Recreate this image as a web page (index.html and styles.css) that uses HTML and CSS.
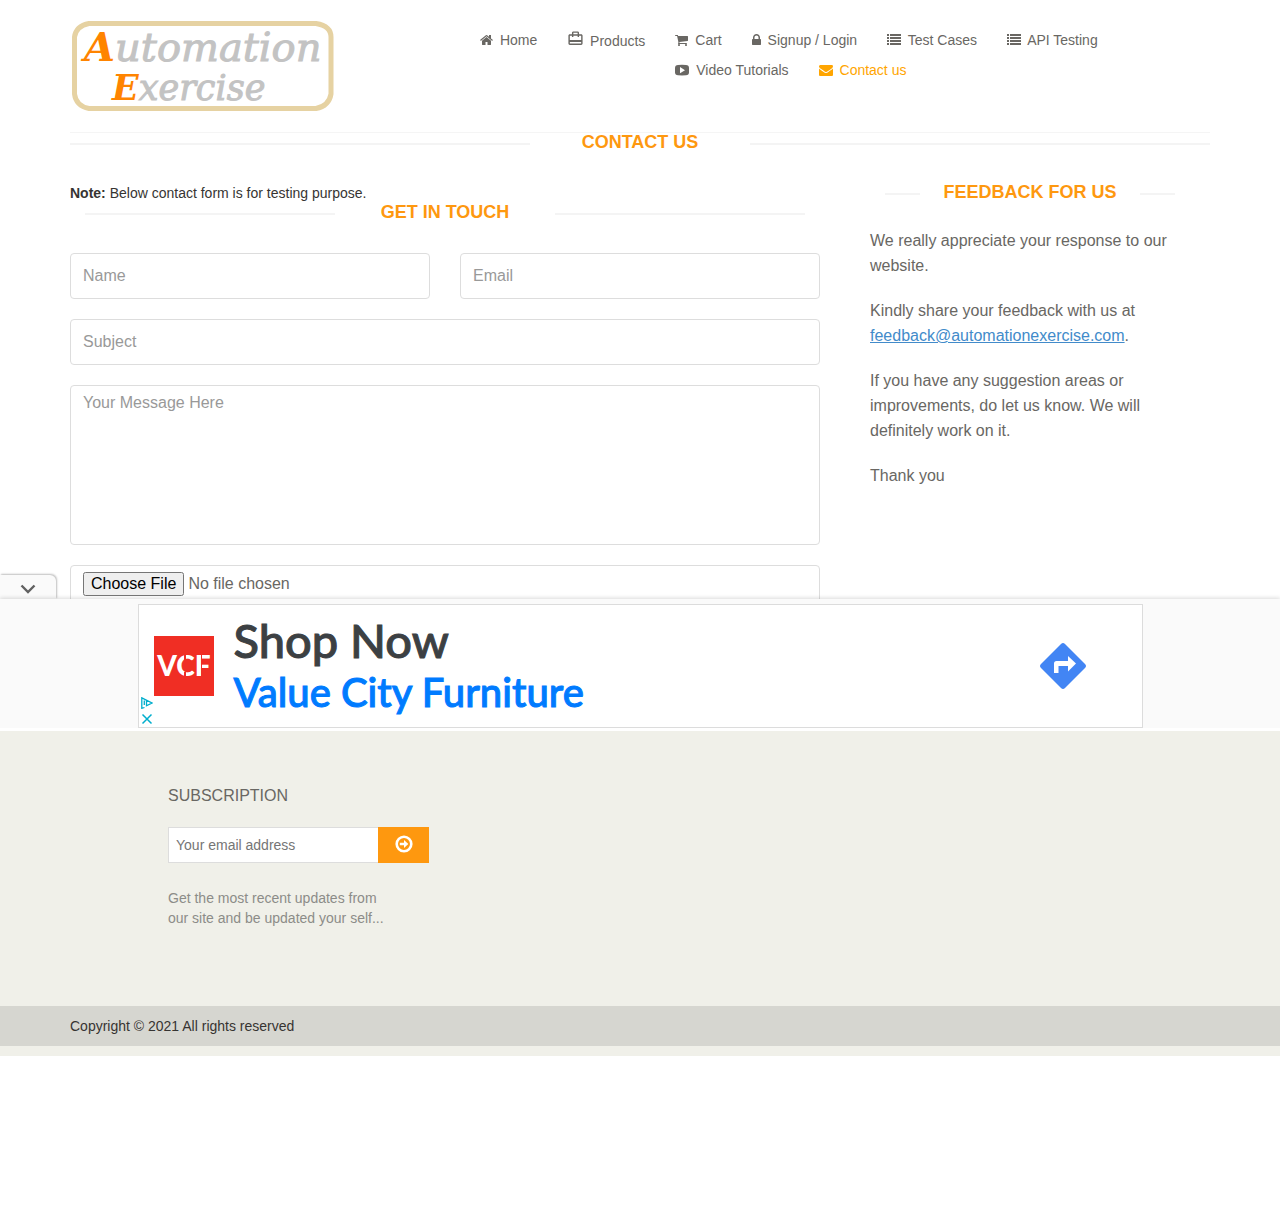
FILE: index.html
```html
<!DOCTYPE html>
<html lang="en">
<head>
<meta charset="utf-8">
<meta name="viewport" content="width=device-width, initial-scale=1">
<title>Automation Exercise - Contact Us</title>
<link rel="stylesheet" href="styles.css">
</head>
<body>
<header class="container">
  <div class="header-row">
    <a class="logo" href="#" aria-label="Automation Exercise">
      <svg width="266" height="92" viewBox="0 0 266 92">
        <path d="M19 3.500H246Q261 6 261 17V74Q259 86 246 88.500H19Q6 86 4.500 74V17Q6 6 19 3.500Z" fill="#fff" stroke="#e6d2a2" stroke-width="5"/>
        <text class="logo-text" x="14" y="41" font-size="40"><tspan class="logo-cap">A</tspan>utomation</text>
        <text class="logo-text" x="42" y="80" font-size="35"><tspan class="logo-cap">E</tspan>xercise</text>
      </svg>
    </a>
    <nav>
      <ul class="menu">
        <li><a href="#"><svg class="icon" width="13" height="14" viewBox="64 0 1664 1792"><path d="M1472 992v480q0 26-19 45t-45 19h-384v-384h-256v384h-384q-26 0-45-19t-19-45v-480q0-1 .5-3t.5-3l575-474 575 474q1 2 1 6zm223-69l-62 74q-8 9-21 11h-3q-13 0-21-7l-692-577-692 577q-12 8-24 7-13-2-21-11l-62-74q-8-10-7-23.500t11-21.500l719-599q32-26 76-26t76 26l244 204v-195q0-14 9-23t23-9h192q14 0 23 9t9 23v408l219 182q10 8 11 21.500t-7 23.500z"/></svg> Home</a></li>
        <li><a href="#"><svg class="icon icon-bag" width="17" height="17" viewBox="0 0 24 24"><path d="M20 6h-3V4c0-1.110-.89-2-2-2H9c-1.110 0-2 .89-2 2v2H4c-1.110 0-2 .89-2 2v11c0 1.110.89 2 2 2h16c1.110 0 2-.89 2-2V8c0-1.110-.89-2-2-2zM9 4h6v2H9V4zm11 15H4v-2h16v2zm0-5H4V8h3v2h2V8h6v2h2V8h3v6z"/></svg> Products</a></li>
        <li><a href="#"><svg class="icon" width="13" height="14" viewBox="64 0 1664 1792"><path d="M704 1536q0 52-38 90t-90 38-90-38-38-90 38-90 90-38 90 38 38 90zm896 0q0 52-38 90t-90 38-90-38-38-90 38-90 90-38 90 38 38 90zm128-1088v512q0 24-16.500 42.500t-40.500 21.500l-1044 122q13 60 13 70 0 16-24 64h920q26 0 45 19t19 45-19 45-45 19h-1024q-26 0-45-19t-19-45q0-11 8-31.500t16-36 21.500-40 15.500-29.500l-177-823h-204q-26 0-45-19t-19-45 19-45 45-19h256q16 0 28.500 6.500t19.500 15.500 13 24.500 8 26 5.500 29.500 4.500 26h1201q26 0 45 19t19 45z"/></svg> Cart</a></li>
        <li><a href="#"><svg class="icon" width="9" height="14" viewBox="320 0 1152 1792"><path d="M640 768h512v-192q0-106-75-181t-181-75-181 75-75 181v192zm832 96v576q0 40-28 68t-68 28h-960q-40 0-68-28t-28-68v-576q0-40 28-68t68-28h32v-192q0-184 132-316t316-132 316 132 132 316v192h32q40 0 68 28t28 68z"/></svg> Signup / Login</a></li>
        <li><a href="#"><svg class="icon" width="14" height="14" viewBox="0 0 14 14"><path d="M0 1h2v2H0zM3 1h11v2H3zM0 4h2v2H0zM3 4h11v2H3zM0 7h2v2H0zM3 7h11v2H3zM0 10h2v2H0zM3 10h11v2H3z"/></svg> Test Cases</a></li>
        <li><a href="#"><svg class="icon" width="14" height="14" viewBox="0 0 14 14"><path d="M0 1h2v2H0zM3 1h11v2H3zM0 4h2v2H0zM3 4h11v2H3zM0 7h2v2H0zM3 7h11v2H3zM0 10h2v2H0zM3 10h11v2H3z"/></svg> API Testing</a></li>
        <li><a href="#"><svg class="icon" width="14" height="14" viewBox="0 0 14 14"><path fill-rule="evenodd" d="M3 2Q7 1.700 11 2Q14 2.100 14 5V9.500Q14 12 11 12.300Q7 12.600 3 12.300Q0 12 0 9.500V5Q0 2.100 3 2ZM5 4V10.300L10 7.200Z"/></svg> Video Tutorials</a></li>
        <li><a class="active" href="#"><svg class="icon" width="14" height="14" viewBox="0 0 1792 1792"><path d="M1792 710v794q0 66-47 113t-113 47h-1472q-66 0-113-47t-47-113v-794q44 49 101 87 362 246 497 345 57 42 92.500 65.500t94.500 48 110 24.500h2q51 0 110-24.500t94.500-48 92.500-65.500q170-123 498-345 57-39 100-87zm0-294q0 79-49 151t-122 123q-376 261-468 325-10 7-42.500 31t-54 38.500-52 32.500-57.500 27-50 9h-2q-23 0-50-9t-57.500-27-52-32.500-54-38.500-42.500-31q-91-64-262-182.500t-205-142.500q-62-42-117-115.500t-55-136.500q0-78 41.500-130t118.500-52h1472q65 0 112.500 47t47.500 113z"/></svg> Contact us</a></li>
      </ul>
    </nav>
  </div>
</header>

<main>
  <div class="container">
    <h2 class="title page-title"><span>Contact Us</span></h2>
    <div class="columns">
      <section>
        <div class="note"><b>Note:</b> Below contact form is for testing purpose.</div>
        <h2 class="title"><span>Get In Touch</span></h2>
        <form class="contact-form">
          <input class="field" type="text" placeholder="Name" aria-label="Name">
          <input class="field" type="email" placeholder="Email" aria-label="Email">
          <input class="field wide" type="text" placeholder="Subject" aria-label="Subject">
          <textarea class="field wide message" placeholder="Your Message Here" aria-label="Your Message Here"></textarea>
          <input class="field wide" type="file" aria-label="Upload file">
        </form>
      </section>
      <aside class="contact-info">
        <h2 class="title"><span>Feedback For Us</span></h2>
        <p>We really appreciate your response to our website.</p>
        <p>Kindly share your feedback with us at <a href="mailto:feedback@automationexercise.com">feedback@automationexercise.com</a>.</p>
        <p>If you have any suggestion areas or improvements, do let us know. We will definitely work on it.</p>
        <p>Thank you</p>
      </aside>
    </div>
  </div>

  <div class="anchor-ad">
    <button class="ad-toggle" type="button" aria-label="Collapse ad">
      <svg width="16" height="10" viewBox="0 0 16 10"><path d="M1.500 1.500L8 8L14.500 1.500" fill="none" stroke="#616161" stroke-width="2.400"/></svg>
    </button>
    <div class="ad-panel">
      <div class="ad">
        <div class="ad-choices">
          <svg width="12" height="12" viewBox="0 0 12 12" fill="none" stroke="#00aecd" stroke-width="1.300"><path d="M3.500 10.500L.8 11.300V.8L11 6L5.500 8.800V3.800M3.300 3.500V8"/></svg>
          <svg width="12" height="12" viewBox="0 0 12 12" stroke="#00aecd" stroke-width="1.500"><path d="M1.500 1.500L10.500 10.500M10.500 1.500L1.500 10.500"/></svg>
        </div>
        <svg class="brand" width="60" height="60" viewBox="0 0 60 60">
          <path fill="#f02e24" d="M0 0h60v60H0z"/>
          <text class="brand-text" x="30" y="40" text-anchor="middle">VCF</text>
          <path fill="#f02e24" d="M30 16h2v8h-2zM30 36h2v8h-2zM47 16h1v28h-1z"/>
        </svg>
        <div class="ad-copy">
          <a class="ad-head" href="#">Shop Now</a>
          <a class="ad-name" href="#">Value City Furniture</a>
        </div>
        <a class="ad-go" href="#" aria-label="Directions">
          <svg width="46" height="46" viewBox="0 0 46 46"><path d="M21 1Q23 -1 25 1L45 21Q47 23 45 25L25 45Q23 47 21 45L1 25Q-1 23 1 21Z" fill="#4285f4"/><path d="M14 30V20.500Q14 18 16.500 18H28V13L36 20.500L28 28.500V23H18.500V30Z" fill="#fff"/></svg>
        </a>
      </div>
    </div>
  </div>
</main>

<footer>
  <div class="container">
    <form class="subscribe">
      <h2>Subscription</h2>
      <div class="subscribe-row">
        <input type="email" placeholder="Your email address" aria-label="Your email address">
        <button type="button" aria-label="Subscribe">
          <svg width="18" height="18" viewBox="0 0 18 18"><circle cx="9" cy="9" r="7.300" fill="none" stroke="#fff" stroke-width="2.600"/><path d="M4.800 7.700H9V5L13.300 9L9 13V10.300H4.800Z" fill="#fff"/></svg>
        </button>
      </div>
      <p>Get the most recent updates from<br>our site and be updated your self...</p>
    </form>
  </div>
  <div class="copyright"><div class="container">Copyright © 2021 All rights reserved</div></div>
</footer>
</body>
</html>
```
FILE: styles.css
```css
* { box-sizing: border-box; }

body {
  margin: 0;
  background: #fff;
  color: #363432;
  font: 14px/20px "Liberation Sans", Arial, sans-serif;
}

.container {
  max-width: 1170px;
  margin: 0 auto;
  padding: 0 15px;
}

/* Header */
.header-row {
  display: grid;
  grid-template-columns: 380px 1fr;
  column-gap: 15px;
  height: 133px;
  padding-top: 20px;
  border-bottom: 1px solid #f5f5f5;
}
.logo svg { display: block; }
.logo-text {
  fill: #c3c3c3;
  stroke: #c3c3c3;
  stroke-width: 1px;
  font-family: "DejaVu Serif", serif;
  font-style: italic;
}
.logo-cap { fill: #ff8400; stroke: none; font-weight: bold; }

.menu {
  list-style: none;
  margin: 0;
  padding: 5px 0 0;
}
.menu li { float: left; padding: 5px 15px; }
.menu a { color: #696763; text-decoration: none; }
.menu a.active { color: #ffa500; }
.icon { margin-right: 3px; vertical-align: -2px; fill: currentColor; }
.icon-bag { margin-right: 2px; vertical-align: -1px; }

/* Section titles with a rule on each side */
.title {
  display: flex;
  margin: 0 0 32px;
  padding: 0 15px;
  color: #fe980f;
  font-size: 18px;
  line-height: 18px;
  text-align: center;
  text-transform: uppercase;
}
.title span { width: 220px; }
.title::before,
.title::after {
  content: "";
  flex: 1;
  height: 2px;
  margin-top: 10px;
  background: #f4f4f4;
}
.page-title { padding: 0; }

/* Main */
main { position: relative; padding-bottom: 120px; overflow: hidden; }
.columns {
  display: grid;
  grid-template-columns: minmax(0, 750px) minmax(0, 320px);
  column-gap: 50px;
}
.contact-form {
  display: grid;
  grid-template-columns: 1fr 1fr;
  gap: 20px 30px;
}
.field {
  width: 100%;
  height: 46px;
  padding: 6px 12px;
  border: 1px solid #ddd;
  border-radius: 4px;
  background: #fff;
  color: #696763;
  font: 16px/22px "Liberation Sans", Arial, sans-serif;
}
.field::placeholder { color: #999; opacity: 1; }
.wide { grid-column: 1 / -1; }
.message { height: 160px; resize: none; }

.contact-info { color: #696763; font-size: 16px; line-height: 25px; }
.contact-info .title { margin-bottom: 27px; }
.contact-info p { margin: 0 0 20px; }
.contact-info a { color: #428bca; }

/* Ad strip lying over the end of the form */
.anchor-ad {
  position: absolute;
  right: 0;
  bottom: 0;
  left: 0;
}
.ad-toggle {
  display: flex;
  align-items: center;
  justify-content: center;
  width: 56px;
  height: 24px;
  padding: 4px 0 0;
  border: 0;
  border-radius: 0 6px 0 0;
  background: #fafafa;
  box-shadow: 1px -1px 2px rgba(0, 0, 0, .25);
}
.ad-panel {
  padding-top: 5px;
  border-bottom: 3px solid #fff;
  background: #fafafa;
  box-shadow: 0 -1px 4px rgba(0, 0, 0, .15);
}
.ad {
  position: relative;
  display: flex;
  align-items: center;
  max-width: 1005px;
  height: 124px;
  margin: 0 auto;
  padding: 0 56px 0 15px;
  border: 1px solid #dcdcdc;
  background: #fff;
}
.ad-choices {
  position: absolute;
  bottom: 2px;
  left: 2px;
  display: grid;
  gap: 4px;
}
.ad-choices svg { display: block; }
.brand { margin-right: 20px; }
.brand-text {
  fill: #fff;
  font: 900 28px Lato, sans-serif;
}
.ad-copy { display: grid; flex: 1; font-family: Lato, sans-serif; font-weight: 500; }
.ad-copy a { text-decoration: none; -webkit-text-stroke: 1px currentColor; }
.ad-head { color: #3c4043; font-size: 47px; line-height: 52px; }
.ad-name { color: #007bff; font-size: 40px; line-height: 52px; }
.ad-go svg { display: block; }

/* Footer */
footer { padding-bottom: 10px; background: #f0f0e9; }
.subscribe { height: 275px; margin-left: 98px; padding-top: 55px; }
.subscribe h2 {
  margin: 0 0 21px;
  color: #696763;
  font-size: 16px;
  font-weight: normal;
  line-height: 20px;
  text-transform: uppercase;
}
.subscribe-row { display: flex; width: 261px; height: 36px; }
.subscribe-row input {
  flex: 1;
  min-width: 0;
  padding: 0 7px;
  border: 1px solid #ddd;
  border-right: 0;
  border-radius: 0;
  background: #fff;
  font: 14px/20px "Liberation Sans", Arial, sans-serif;
}
.subscribe-row button {
  display: flex;
  align-items: center;
  justify-content: center;
  width: 51px;
  padding: 0 0 2px;
  border: 0;
  background: #fe980f;
}
.subscribe p { margin: 25px 0 0; color: #8c8c88; }
.copyright { padding: 10px 0; background: #d6d6d0; }
```
